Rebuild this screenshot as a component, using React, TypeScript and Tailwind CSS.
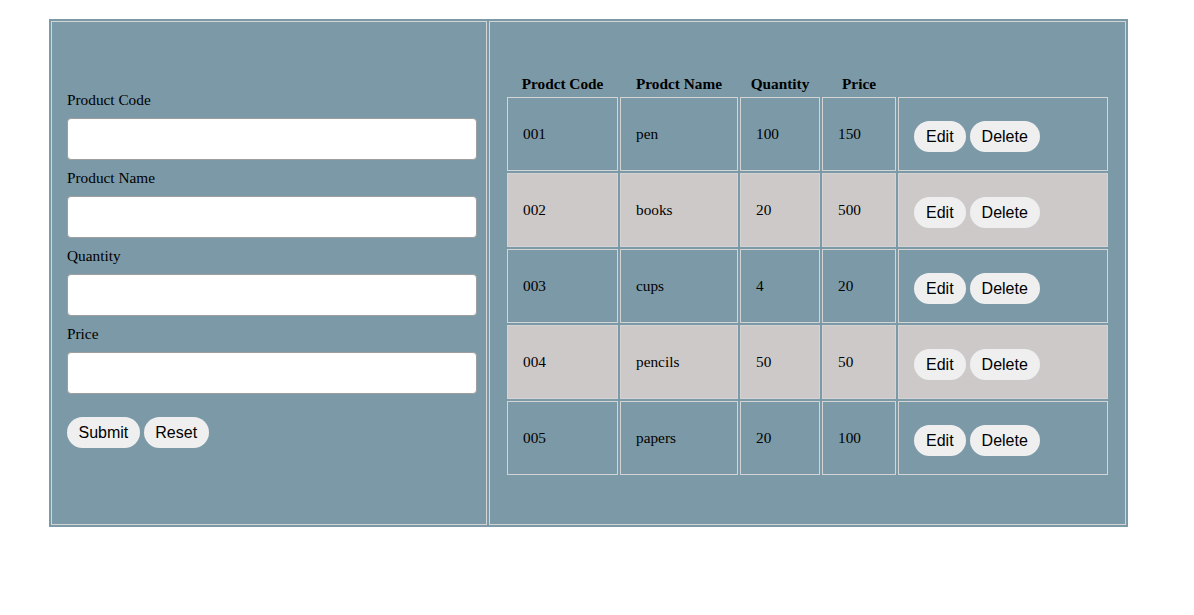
import React from "react";

const rows = [
  { code: "001", name: "pen", qty: "100", price: "150" },
  { code: "002", name: "books", qty: "20", price: "500" },
  { code: "003", name: "cups", qty: "4", price: "20" },
  { code: "004", name: "pencils", qty: "50", price: "50" },
  { code: "005", name: "papers", qty: "20", price: "100" },
];

const labels = ["Product Code", "Product Name", "Quantity", "Price"];

function Pill({ children, px = "px-3" }: { children: React.ReactNode; px?: string }) {
  return (
    <button
      className={`h-[31px] rounded-full bg-[#efefef] ${px} text-[16px] leading-[18px] text-black [font-family:'Liberation_Sans',Arial,sans-serif]`}
    >
      {children}
    </button>
  );
}

export default function App() {
  return (
    <div className="min-h-[615px] bg-white pl-[49px] pt-[19px] [font-family:'Liberation_Serif','Times_New_Roman',serif] text-black">
      <div className="flex w-[1079px] gap-[2px] bg-[#7c99a7] p-[2px]">
        {/* Left form cell */}
        <div className="flex h-[504px] w-[436px] flex-col border border-[#d4d4d4] pl-[15px] pt-[69px]">
          {labels.map((l) => (
            <div key={l} className="flex flex-col">
              <div className="mb-[9px] text-[15.3px] leading-[18px]">{l}</div>
              <input className="mb-[9px] h-[42px] w-[410px] rounded-[4px] border border-[#9e9e9e] bg-white" />
            </div>
          ))}
          <div className="mt-[14px] flex gap-[4px]">
            <Pill px="px-[11.5px]">Submit</Pill>
            <Pill px="px-[11.5px]">Reset</Pill>
          </div>
        </div>
        {/* Right table cell */}
        <div className="h-[504px] w-[637px] border border-[#d4d4d4] pl-[15px] pt-[49px]">
          <table className="w-[605px] table-fixed border-separate border-spacing-[2px] text-[15.3px]">
            <colgroup>
              <col className="w-[111px]" />
              <col className="w-[118px]" />
              <col className="w-[80px]" />
              <col className="w-[74px]" />
              <col className="w-[210px]" />
            </colgroup>
            <thead>
              <tr>
                <th className="h-[22px] p-0 text-center font-bold leading-[18px]">Prodct Code</th>
                <th className="h-[22px] p-0 text-center font-bold leading-[18px]">Prodct Name</th>
                <th className="h-[22px] p-0 text-center font-bold leading-[18px]">Quantity</th>
                <th className="h-[22px] p-0 text-center font-bold leading-[18px]">Price</th>
                <th className="h-[22px] p-0"></th>
              </tr>
            </thead>
            <tbody>
              {rows.map((r, i) => {
                const bg = i % 2 === 1 ? "bg-[#cdc9c8]" : "";
                const td = `h-[74px] border border-[#d4d4d4] pl-[15px] align-middle leading-[18px] ${bg}`;
                return (
                  <tr key={r.code}>
                    <td className={td}>{r.code}</td>
                    <td className={td}>{r.name}</td>
                    <td className={td}>{r.qty}</td>
                    <td className={td}>{r.price}</td>
                    <td className={td}>
                      <div className="flex gap-[4px] pt-[5px]">
                        <Pill>Edit</Pill>
                        <Pill>Delete</Pill>
                      </div>
                    </td>
                  </tr>
                );
              })}
            </tbody>
          </table>
        </div>
      </div>
    </div>
  );
}
